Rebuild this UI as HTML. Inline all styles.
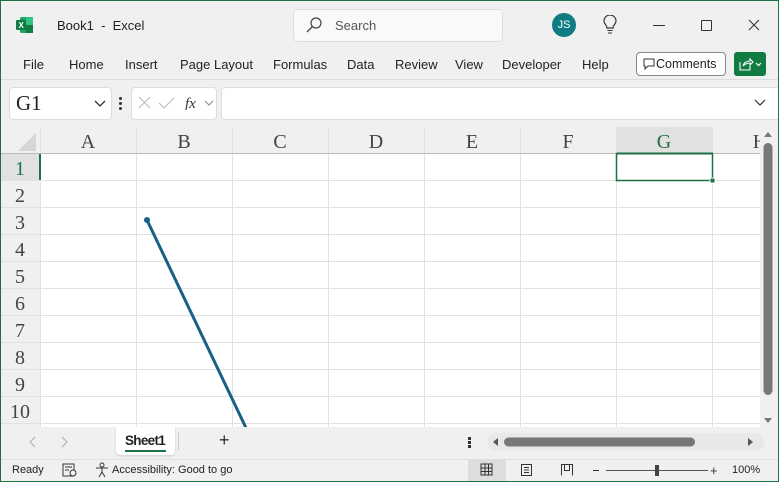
<!DOCTYPE html><html><head><style>
body{margin:0;width:779px;height:482px;overflow:hidden;background:#f0f0f0;font-family:"Liberation Sans",sans-serif;position:relative}
.a{position:absolute}
.win{position:absolute;left:0;top:0;width:777px;height:480px;border:1px solid #1e7145;pointer-events:none}
.t{font-size:13px;color:#222}
.serif{font-family:"Liberation Serif",serif;color:#333}
</style></head><body>
<svg class="a" style="left:16px;top:16px" width="18" height="18"><rect x="4" y="1" width="13" height="16" rx="1.5" fill="#21a366"/><rect x="10" y="1" width="7" height="8" fill="#33c481"/><rect x="10" y="9" width="7" height="8" fill="#107c41"/><rect x="0" y="4" width="10" height="10" rx="1" fill="#107c41"/><text x="2.5" y="12" font-size="8" fill="#fff" font-family="Liberation Sans" font-weight="bold">X</text></svg>
<div class="a t" style="left:57px;top:18px">Book1&nbsp; - &nbsp;Excel</div>
<div class="a" style="left:293px;top:9px;width:208px;height:31px;background:#f9f9f9;border:1px solid #ddd;border-radius:5px"></div>
<svg class="a" style="left:306px;top:17px" width="16" height="16"><circle cx="10" cy="6" r="5" fill="none" stroke="#444" stroke-width="1.2"/><line x1="6.5" y1="9.5" x2="1" y2="15" stroke="#444" stroke-width="1.3"/></svg>
<div class="a t" style="left:335px;top:18px;color:#555">Search</div>
<div class="a" style="left:552px;top:13px;width:24px;height:24px;border-radius:50%;background:#0f7b82;color:#fff;font-size:11px;text-align:center;line-height:24px">JS</div>
<svg class="a" style="left:602px;top:15px" width="16" height="20"><path d="M5 13C5 10 2 9 2 6A6 6 0 0 1 14 6C14 9 11 10 11 13Z" fill="none" stroke="#333" stroke-width="1.2"/><line x1="5.5" y1="15.5" x2="10.5" y2="15.5" stroke="#333"/><line x1="6" y1="18" x2="10" y2="18" stroke="#333"/></svg>
<div class="a" style="left:653px;top:25px;width:12px;height:1px;background:#333"></div>
<div class="a" style="left:701px;top:20px;width:9px;height:9px;border:1px solid #333;border-radius:1px"></div>
<svg class="a" style="left:748px;top:19px" width="12" height="12"><path d="M1 1L11 11M11 1L1 11" stroke="#333" stroke-width="1.1"/></svg>
<div class="a t" style="left:23px;top:57px">File</div>
<div class="a t" style="left:69px;top:57px">Home</div>
<div class="a t" style="left:125px;top:57px">Insert</div>
<div class="a t" style="left:180px;top:57px">Page Layout</div>
<div class="a t" style="left:273px;top:57px">Formulas</div>
<div class="a t" style="left:347px;top:57px">Data</div>
<div class="a t" style="left:395px;top:57px">Review</div>
<div class="a t" style="left:455px;top:57px">View</div>
<div class="a t" style="left:502px;top:57px">Developer</div>
<div class="a t" style="left:582px;top:57px">Help</div>
<div class="a" style="left:636px;top:52px;width:88px;height:22px;border:1px solid #888;border-radius:4px;background:#fff"></div>
<svg class="a" style="left:643px;top:58px" width="12" height="12"><path d="M1 1H11V8H5L2 11V8H1Z" fill="none" stroke="#333"/></svg>
<div class="a t" style="left:656px;top:57px;font-size:12.5px">Comments</div>
<div class="a" style="left:734px;top:52px;width:32px;height:24px;background:#107c41;border-radius:3px"></div>
<svg class="a" style="left:738px;top:56px" width="26" height="16"><path d="M2 6V14H12V10M5 10C6 6 9 5 12 5V3L15 6L12 9V7C9 7 7 8 5 10" fill="none" stroke="#fff" stroke-width="1.1"/><path d="M18 7L20.5 9.5L23 7" fill="none" stroke="#fff" stroke-width="1.2"/></svg>
<div class="a" style="left:0;top:79px;width:779px;height:1px;background:#ddd"></div>
<div class="a" style="left:9px;top:87px;width:101px;height:31px;background:#fff;border:1px solid #ddd;border-radius:4px"></div>
<div class="a serif" style="left:16px;top:91px;font-size:21px;color:#222">G1</div>
<svg class="a" style="left:94px;top:100px" width="12" height="8"><path d="M1 1L6 6L11 1" fill="none" stroke="#333" stroke-width="1.3"/></svg>
<div class="a" style="left:119px;top:97px;width:3px;height:3px;background:#333;box-shadow:0 5px 0 #333,0 10px 0 #333;border-radius:50%"></div>
<div class="a" style="left:131px;top:87px;width:84px;height:31px;background:#fff;border:1px solid #ddd;border-radius:4px"></div>
<svg class="a" style="left:138px;top:96px" width="80" height="14"><path d="M1 1L12 12M12 1L1 12" stroke="#bbb" stroke-width="1.1"/><path d="M21 7L26 12L36 2" fill="none" stroke="#bbb" stroke-width="1.1"/><text x="47" y="12" font-family="Liberation Serif" font-style="italic" font-size="15" fill="#333">fx</text><path d="M67 5L71 9L75 5" fill="none" stroke="#888"/></svg>
<div class="a" style="left:221px;top:87px;width:557px;height:31px;background:#fff;border:1px solid #ddd;border-radius:4px"></div>
<svg class="a" style="left:754px;top:99px" width="12" height="8"><path d="M1 1L6 6L11 1" fill="none" stroke="#333" stroke-width="1.2"/></svg>
<svg class="a" style="left:0;top:127px" width="760" height="300">
<rect x="0" y="0" width="760" height="300" fill="#fff"/>
<rect x="0" y="0" width="760" height="26" fill="#f0f0f0"/>
<rect x="0" y="0" width="40" height="300" fill="#f0f0f0"/>
<rect x="617" y="0" width="96" height="26" fill="#e1e1e1"/>
<rect x="0" y="27" width="40" height="26" fill="#e1e1e1"/>
<path d="M18 24L36 6V24Z" fill="#d6d6d6"/>
<g stroke="#e1e1e1" stroke-width="1">
<line x1="40.5" y1="0" x2="40.5" y2="300"/>
<line x1="136.5" y1="0" x2="136.5" y2="300"/><line x1="232.5" y1="0" x2="232.5" y2="300"/><line x1="328.5" y1="0" x2="328.5" y2="300"/><line x1="424.5" y1="0" x2="424.5" y2="300"/><line x1="520.5" y1="0" x2="520.5" y2="300"/><line x1="616.5" y1="0" x2="616.5" y2="300"/><line x1="712.5" y1="0" x2="712.5" y2="300"/>
<line x1="0" y1="53.5" x2="760" y2="53.5"/><line x1="0" y1="80.5" x2="760" y2="80.5"/><line x1="0" y1="107.5" x2="760" y2="107.5"/><line x1="0" y1="134.5" x2="760" y2="134.5"/><line x1="0" y1="161.5" x2="760" y2="161.5"/><line x1="0" y1="188.5" x2="760" y2="188.5"/><line x1="0" y1="215.5" x2="760" y2="215.5"/><line x1="0" y1="242.5" x2="760" y2="242.5"/><line x1="0" y1="269.5" x2="760" y2="269.5"/><line x1="0" y1="296.5" x2="760" y2="296.5"/>
</g>
<line x1="0" y1="26.5" x2="760" y2="26.5" stroke="#bbb"/>
<line x1="617" y1="26.5" x2="713" y2="26.5" stroke="#1e7145" stroke-width="2"/>
<line x1="40" y1="27" x2="40" y2="53" stroke="#1e7145" stroke-width="2"/>
<g font-family="Liberation Serif" font-size="20" fill="#444" text-anchor="middle">
<text x="88" y="21">A</text><text x="184" y="21">B</text><text x="280" y="21">C</text><text x="376" y="21">D</text><text x="472" y="21">E</text><text x="568" y="21">F</text><text x="664" y="21" fill="#1e7145">G</text><text x="760" y="21">H</text>
<text x="20" y="48" fill="#1e7145">1</text><text x="20" y="75">2</text><text x="20" y="102">3</text><text x="20" y="129">4</text><text x="20" y="156">5</text><text x="20" y="183">6</text><text x="20" y="210">7</text><text x="20" y="237">8</text><text x="20" y="264">9</text><text x="20" y="291">10</text>
</g>
<rect x="616.5" y="26.5" width="96" height="27" fill="none" stroke="#1e7145" stroke-width="1.5"/>
<rect x="710" y="51" width="5" height="5" fill="#1e7145" stroke="#fff"/>
<line x1="147" y1="93" x2="247" y2="303" stroke="#1a5f85" stroke-width="3"/>
<circle cx="147" cy="93" r="3" fill="#1a5f85"/>
</svg>
<div class="a" style="left:760px;top:127px;width:18px;height:300px;background:#f0f0f0"></div>
<svg class="a" style="left:762px;top:130px" width="12" height="296"><path d="M2 7L6 2L10 7Z" fill="#777"/><rect x="1.5" y="13" width="9" height="252" rx="4.5" fill="#777"/><path d="M2 288L6 293L10 288Z" fill="#777"/></svg>
<svg class="a" style="left:26px;top:436px" width="50" height="12"><path d="M9 1L4 6L9 11M36 1L41 6L36 11" fill="none" stroke="#aaa"/></svg>
<div class="a" style="left:116px;top:427px;width:59px;height:28px;background:#fff;border-radius:0 0 4px 4px;box-shadow:0 1px 2px #ccc"></div>
<div class="a" style="left:125px;top:433px;font-size:13.5px;font-weight:bold;color:#222;letter-spacing:-0.7px">Sheet1</div>
<div class="a" style="left:125px;top:450px;width:41px;height:2px;background:#1e7145"></div>
<div class="a" style="left:178px;top:432px;width:1px;height:18px;background:#ccc"></div>
<div class="a" style="left:219px;top:430px;font-size:18px;color:#333">+</div>
<div class="a" style="left:468px;top:437px;width:3px;height:3px;background:#333;box-shadow:0 4px 0 #333,0 8px 0 #333"></div>
<div class="a" style="left:488px;top:433px;width:276px;height:18px;background:#e8e8e8;border-radius:8px"></div>
<svg class="a" style="left:490px;top:436px" width="270" height="12"><path d="M8 2L3 6L8 10Z" fill="#555"/><rect x="14" y="1.5" width="191" height="9" rx="4.5" fill="#777"/><path d="M258 2L263 6L258 10Z" fill="#555"/></svg>
<div class="a" style="left:0;top:459px;width:779px;height:1px;background:#e0e0e0"></div>
<div class="a" style="left:12px;top:464px;font-size:11px;color:#222">Ready</div>
<svg class="a" style="left:62px;top:463px" width="16" height="14"><rect x="1" y="1" width="11" height="12" fill="none" stroke="#333"/><line x1="3" y1="4" x2="10" y2="4" stroke="#333"/><line x1="3" y1="7" x2="7" y2="7" stroke="#333"/><circle cx="11" cy="10" r="3" fill="#f0f0f0" stroke="#333"/></svg>
<svg class="a" style="left:95px;top:462px" width="16" height="16"><circle cx="7" cy="3" r="2" fill="none" stroke="#333"/><path d="M1 6H13M7 6V10L4 15M7 10L10 15" fill="none" stroke="#333"/></svg>
<div class="a" style="left:112px;top:464px;font-size:11px;color:#222">Accessibility: Good to go</div>
<div class="a" style="left:468px;top:459px;width:38px;height:23px;background:#ddd"></div>
<svg class="a" style="left:480px;top:463px" width="100" height="14"><path d="M1 1H12V12H1ZM1 5H12M1 8.5H12M5 1V12M8.5 1V12" fill="none" stroke="#333"/><rect x="41.5" y="1.5" width="10" height="11" fill="none" stroke="#333"/><path d="M44 4.5H49M44 7H49M44 9.5H49" stroke="#333"/><path d="M81.5 12.5V1.5H92.5V12.5M84.5 1.5V7.5H89.5V1.5" fill="none" stroke="#333"/></svg>
<div class="a" style="left:593px;top:470px;width:6px;height:1px;background:#333"></div>
<div class="a" style="left:606px;top:470px;width:102px;height:1px;background:#555"></div>
<div class="a" style="left:655px;top:465px;width:4px;height:11px;background:#444"></div>
<div class="a" style="left:710px;top:463px;font-size:13px;color:#333">+</div>
<div class="a" style="left:732px;top:464px;font-size:11px;color:#222">100%</div>
<div class="win"></div>
</body></html>
